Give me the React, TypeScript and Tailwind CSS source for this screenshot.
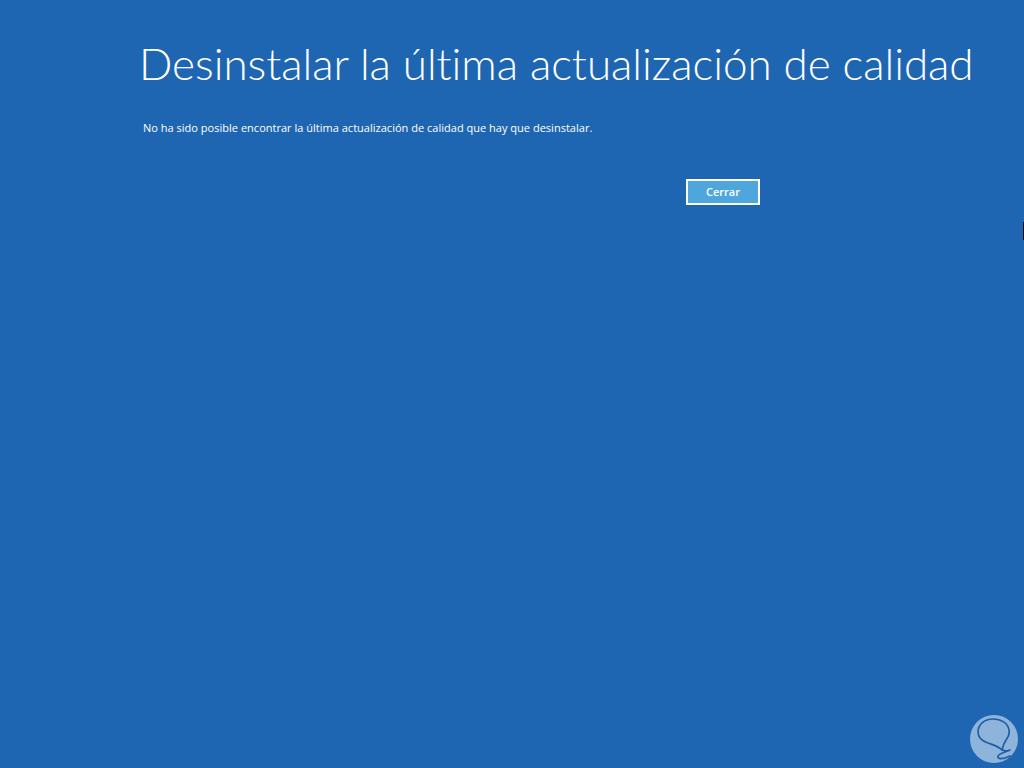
import React from 'react'

function Watermark() {
  return (
    <svg width="48" height="48" viewBox="0 0 48 48" className="absolute left-[970px] top-[715px]">
      <circle cx="24" cy="24" r="24" fill="#8fb4dc" />
      <path
        d="M23 4 C14 4 8 10 8 17 C8 23 12 26 18 28 C24 30 28 31 32 35 C33 31 34 28 36 25 C38 22 40 20 39 15 C38 8 31 4 23 4 Z M32 35 C35 36 38 36 40 35 C36 37 30 38 28 41 C27 44 32 45 40 41"
        fill="none"
        stroke="#1f5fa8"
        strokeWidth="1.7"
        strokeLinecap="round"
        strokeLinejoin="round"
      />
    </svg>
  )
}

export default function App() {
  return (
    <div className="relative h-[768px] w-[1024px] overflow-hidden bg-[#1f66b2] text-white [font-family:'Open_Sans',sans-serif]">
      <div className="flex flex-col pl-[139px] pt-[33px]">
        <h1 className="whitespace-nowrap text-[44px] font-light leading-[60px] tracking-[-0.04px] [font-family:Lato,sans-serif] [font-variant-ligatures:none]">
          Desinstalar la última actualización de calidad
        </h1>
        <p className="mt-[26px] pl-[4px] text-[11px] leading-[18px] tracking-[0.015px]">
          No ha sido posible encontrar la última actualización de calidad que hay que desinstalar.
        </p>
        <div className="mt-[42px] pl-[547px]">
          <button
            type="button"
            className="flex h-[26px] w-[74px] items-center justify-center border-2 border-white bg-[#4fa6dc] text-[11px] font-semibold text-white"
          >
            Cerrar
          </button>
        </div>
      </div>
      <div className="absolute right-0 top-[222px] h-[18px] w-px bg-black" />
      <Watermark />
    </div>
  )
}
